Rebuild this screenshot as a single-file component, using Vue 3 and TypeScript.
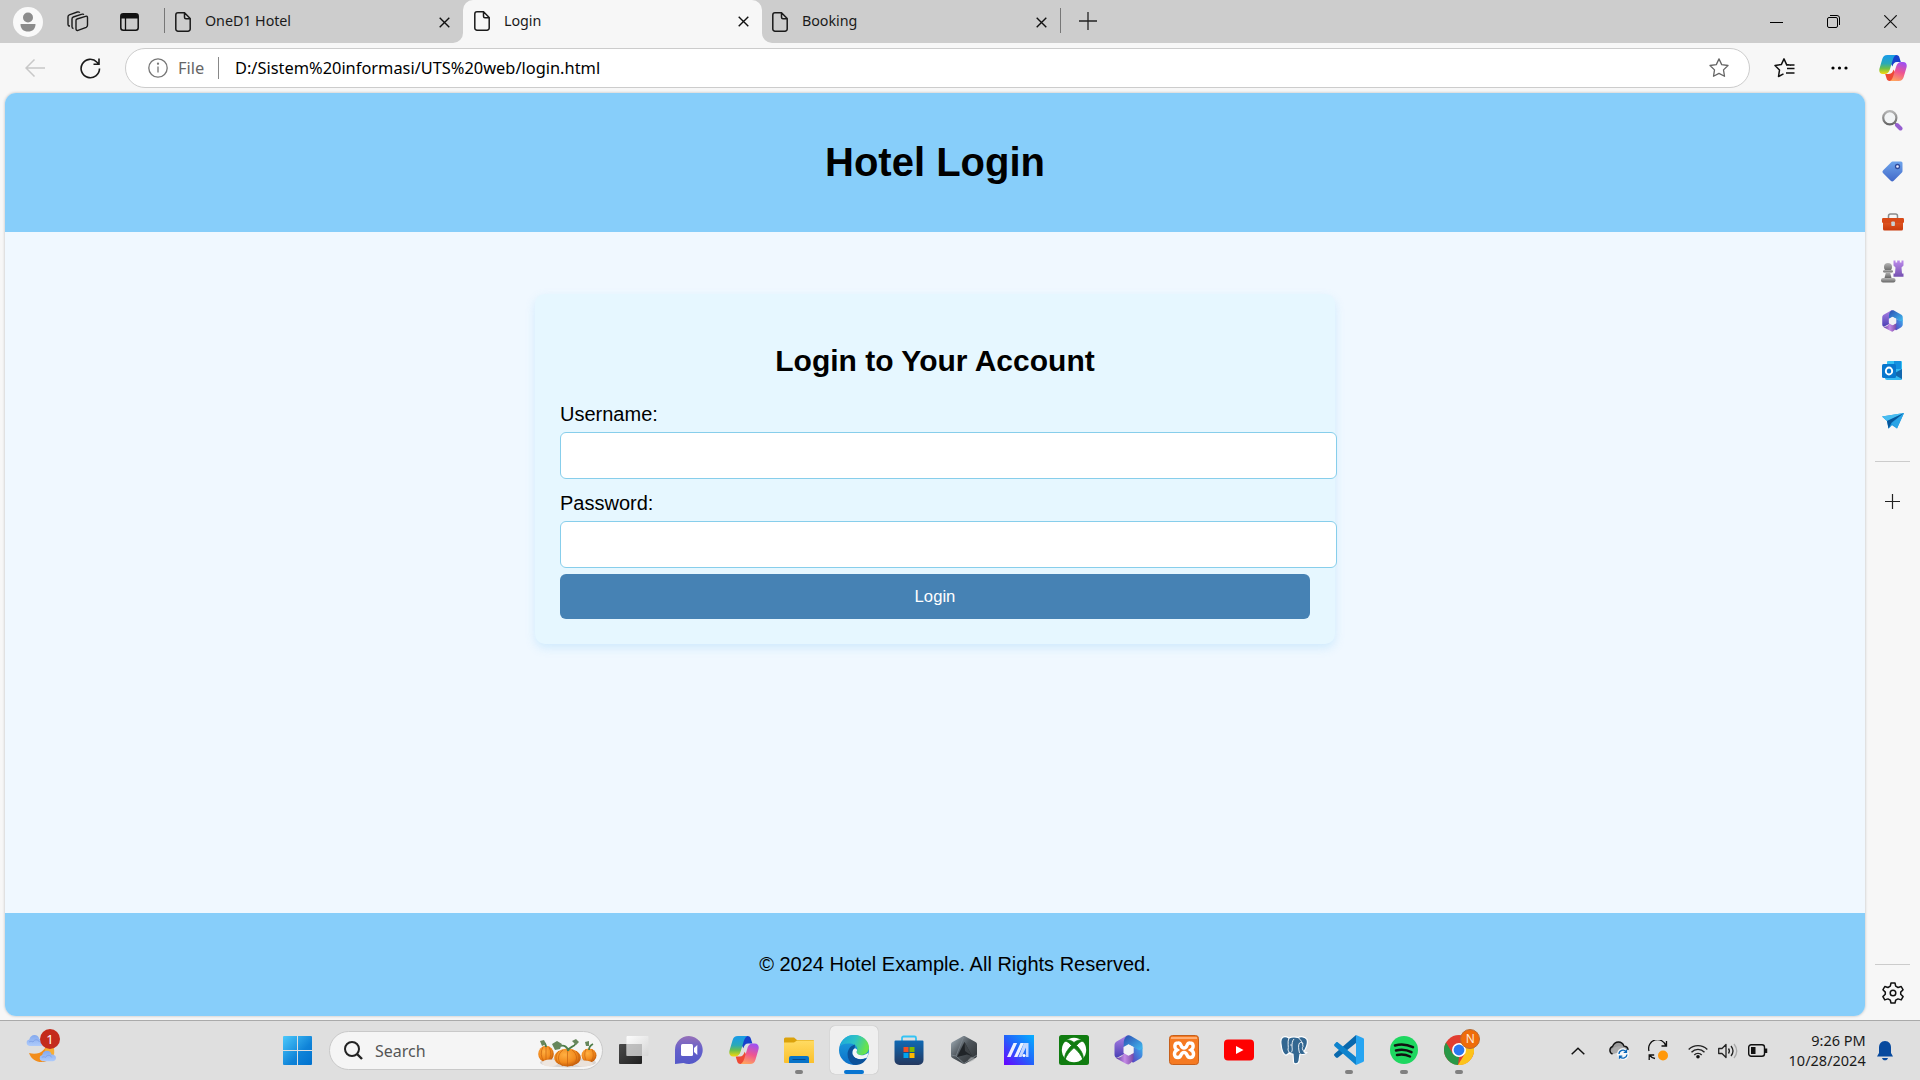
<script setup lang="ts">
interface Tab { title: string; width: number }
const firstTab: Tab = { title: 'OneD1 Hotel', width: 298 }
const fields: { id: string; label: string; type: string }[] = [
  { id: 'username', label: 'Username:', type: 'text' },
  { id: 'password', label: 'Password:', type: 'password' },
]
</script>

<template>
  <div class="screen">
    <svg width="0" height="0" class="defs">
      <defs>
        <linearGradient id="cpA" x1="0" y1="0" x2="0" y2="1"><stop offset=".1" stop-color="#1b9de2" /><stop offset=".45" stop-color="#2aa9b8" /><stop offset=".7" stop-color="#6cbf4b" /><stop offset="1" stop-color="#f7d80c" /></linearGradient>
        <linearGradient id="cpB" x1=".6" y1="0" x2=".3" y2="1"><stop offset="0" stop-color="#a050f0" /><stop offset=".5" stop-color="#ef5590" /><stop offset="1" stop-color="#ffa45e" /></linearGradient>
        <linearGradient id="mA" x1="0" y1="1" x2="1" y2="0"><stop offset="0" stop-color="#5a3fc0" /><stop offset="1" stop-color="#36b5ef" /></linearGradient>
        <linearGradient id="mB" x1="0" y1="0" x2="0" y2="1"><stop offset="0" stop-color="#b083e6" /><stop offset="1" stop-color="#4a3fb5" /></linearGradient>
        <linearGradient id="mC" x1="0" y1="0" x2="1" y2="0"><stop offset="0" stop-color="#5c3a9e" /><stop offset=".5" stop-color="#c58ae6" /><stop offset="1" stop-color="#7a4aa6" /></linearGradient>
        <linearGradient id="mD" x1="0" y1="0" x2="1" y2="1"><stop offset="0" stop-color="#2c4bb0" /><stop offset="1" stop-color="#43bff2" /></linearGradient>
        <linearGradient id="win" x1="0" y1="0" x2="1" y2="1"><stop offset="0" stop-color="#4cc9fb" /><stop offset=".6" stop-color="#0f83d8" /><stop offset="1" stop-color="#0071ce" /></linearGradient>
        <linearGradient id="tag" x1="0" y1="0" x2="0" y2="1"><stop offset="0" stop-color="#6ea4ec" /><stop offset="1" stop-color="#4168c8" /></linearGradient>
        <linearGradient id="purple" x1="0" y1="0" x2="0" y2="1"><stop offset="0" stop-color="#bd8bec" /><stop offset="1" stop-color="#7450b0" /></linearGradient>
        <linearGradient id="grey" x1="0" y1="0" x2="0" y2="1"><stop offset="0" stop-color="#b5b5b5" /><stop offset="1" stop-color="#666" /></linearGradient>
        <linearGradient id="orange" x1="0" y1="0" x2="0" y2="1"><stop offset="0" stop-color="#e8602a" /><stop offset="1" stop-color="#c93a0c" /></linearGradient>
        <linearGradient id="teams" x1="0" y1="0" x2="0" y2="1"><stop offset="0" stop-color="#9670b8" /><stop offset=".5" stop-color="#6460cb" /><stop offset="1" stop-color="#5458c8" /></linearGradient>
        <linearGradient id="folder" x1="0" y1="0" x2="0" y2="1"><stop offset="0" stop-color="#ffdb62" /><stop offset="1" stop-color="#fbc02c" /></linearGradient>
        <linearGradient id="edgeA" x1="0" y1="0" x2="1" y2=".3"><stop offset="0" stop-color="#1aa5df" /><stop offset=".55" stop-color="#2ec3c4" /><stop offset="1" stop-color="#67e34c" /></linearGradient>
        <linearGradient id="edgeB" x1="0" y1="0" x2="0" y2="1"><stop offset="0" stop-color="#1ea4e0" /><stop offset="1" stop-color="#0c6fc8" /></linearGradient>
        <linearGradient id="store" x1="0" y1="0" x2="0" y2="1"><stop offset="0" stop-color="#0f69b4" /><stop offset="1" stop-color="#24385f" /></linearGradient>
        <linearGradient id="asus" x1="1" y1="0" x2="0" y2="1"><stop offset="0" stop-color="#05b0ff" /><stop offset=".5" stop-color="#2263fb" /><stop offset="1" stop-color="#6a00ff" /></linearGradient>
        <linearGradient id="arm" x1="0" y1="0" x2="1" y2="1"><stop offset="0" stop-color="#a8b5bf" /><stop offset=".45" stop-color="#4f565c" /><stop offset="1" stop-color="#2b2e31" /></linearGradient>
        <radialGradient id="pump" cx=".4" cy=".35" r=".7"><stop offset="0" stop-color="#ffb042" /><stop offset=".6" stop-color="#f28a1d" /><stop offset="1" stop-color="#bd5507" /></radialGradient>
        <linearGradient id="task" x1="0" y1="0" x2="1" y2="1"><stop offset="0" stop-color="#4a4a4a" /><stop offset="1" stop-color="#202020" /></linearGradient>
        <linearGradient id="pane" x1="0" y1="0" x2="1" y2="1"><stop offset="0" stop-color="#fff" /><stop offset="1" stop-color="#d5d5d5" /></linearGradient>
        <linearGradient id="cloud" x1="0" y1="0" x2="0" y2="1"><stop offset="0" stop-color="#84a9ee" /><stop offset="1" stop-color="#aecbfb" /></linearGradient>
      </defs>
      <symbol id="copilot" viewBox="0 0 28 26">
        <path d="M14 0h3.200c2 0 2.800 1 3.300 2.800L21.800 7H18c-2.600 0-3.700 1.600-4.600 4.400L10 5z" fill="#1741cc" />
        <path d="M14 26h-3.200c-2 0-2.800-1-3.300-2.800L6.200 19H10c2.600 0 3.700-1.600 4.600-4.400L18 21z" fill="#ee4a35" />
        <path d="M8.300 0H17.200C14.800 1 14 4 13 7.500L11 14c-1 3.500-2.500 5-5.500 5H4C.8 19-.3 16.500.5 13.500L3.300 4C4.200 1.200 5.500 0 8.300 0z" fill="url(#cpA)" />
        <path d="M19.700 26H10.800C13.200 25 14 22 15 18.500L17 12c1-3.500 2.500-5 5.500-5H24c3.200 0 4.300 2.500 3.500 5.500L24.700 22c-.9 2.800-2.200 4-5 4z" fill="url(#cpB)" />
      </symbol>
      <symbol id="m365" viewBox="0 0 28 30">
        <path d="M12 .8 2.500 6.300C.8 7.300 0 8.500 0 10.500v9c0 2.500 1.500 3.800 3.500 2.800L10 18.700 9.500 10C9.500 5.500 10.500 3 14.500.2 13.500 0 13 .2 12 .8z" fill="url(#mB)" />
        <path d="M12 1C9.700 3.300 9.200 5.500 9.200 8.500V13L14 9.500l5 2.500 5 3.500c2 1 4-.5 4-3v-2c0-2-.8-3.200-2.500-4.200L16.500.9C15 0 13.500 0 12 1z" fill="url(#mD)" />
        <path d="M28 10.500v9c0 2-.8 3.200-2.500 4.200L19 27.500c-2 .5-2-3-1-5l1-5.500v-5l5 2.700c2.500 1 4-1.200 4-4.200z" fill="url(#mA)" />
        <path d="M1.500 22.500c2 .8 4 0 6-1.500L10 18l4.500 2.300 4.500-2.600v3.800c0 3.500-1.500 6.500-5 8-.8 0-1.700-.2-2.500-.7l-9-5.100c-.5-.3-.8-.7-1-1.200z" fill="url(#mC)" />
        <path d="m14 9.200 5 2.900v5.800l-5 2.900-5-2.900v-5.800z" fill="#f1f1f4" />
      </symbol>
      <symbol id="page" viewBox="0 0 16 20">
        <path d="M3 .8h6.500L15.200 6.500V17a2.200 2.200 0 0 1-2.200 2.200H3A2.200 2.200 0 0 1 .8 17V3A2.200 2.200 0 0 1 3 .8zM9.500 1v4.200c0 .9.600 1.500 1.500 1.500h4" fill="none" stroke="#1a1a1a" stroke-width="1.500" />
      </symbol>
      <symbol id="x" viewBox="0 0 11 11"><path d="m.7.700 9.600 9.600m0-9.600L.7 10.300" fill="none" stroke="#111" stroke-width="1.400" /></symbol>
      <symbol id="cloudy" viewBox="0 0 18 11"><path d="M3.500 11a3.300 3.300 0 0 1-.2-6.500C4 1.500 6 0 8.500 0s4.300 1.500 4.800 4c3 0 4.700 1.500 4.700 3.500S16.500 11 14.500 11z" fill="url(#cloud)" /><path d="M3 7c1.500-1 3-.7 4 0 1.500-3 5-3 6.500 0" fill="none" stroke="#7a9de4" stroke-width=".8" /></symbol>
    </svg>

    <header class="tabstrip">
      <div class="strip-left">
        <div class="avatar"><svg width="30" height="30" viewBox="0 0 30 30"><circle cx="15" cy="10.500" r="5" fill="#8c8c8c" /><path d="M7.500 17h15c0 5-3 7.500-7.500 7.500S7.500 22 7.500 17z" fill="#8c8c8c" /></svg></div>
        <svg class="ic-work" width="22" height="21" viewBox="0 0 22 21" fill="none" stroke="#1a1a1a" stroke-width="1.400"><path d="m10 8 8.500-2.700c1.300-.4 2 .2 2 1.500v7.500c0 1-.4 1.600-1.300 2L11 19.300c-1.300.5-2-.2-2-1.500V9.500c0-.8.300-1.300 1-1.500zM6.500 17.500c-1 0-1.500-.5-1.500-1.700V8c0-1 .4-1.700 1.300-2L15 3.200c.8-.3 1.500 0 1.700.7M3 15c-1.300 0-2-.5-2-1.700V5.800c0-1 .4-1.700 1.300-2l8-2.800c1.200-.3 2 0 2.400.8" /></svg>
        <svg class="ic-tabs" width="19" height="18" viewBox="0 0 19 18"><rect x=".8" y=".8" width="17.400" height="16.400" rx="2.500" fill="none" stroke="#111" stroke-width="1.500" /><path d="M1 5.500V3a2 2 0 0 1 2-2h13a2 2 0 0 1 2 2v2.500z" fill="#111" /><path d="M5.500 5v12" stroke="#111" stroke-width="1.300" /></svg>
        <i class="bar"></i>
        <div class="tab" :style="{ width: firstTab.width + 'px' }">
          <svg width="16" height="20"><use href="#page" /></svg><span>{{ firstTab.title }}</span><svg class="x" width="11" height="11"><use href="#x" /></svg>
        </div>
      </div>
      <div class="active-wrap">
        <div class="tab active"><svg width="16" height="20"><use href="#page" /></svg><span>Login</span><svg class="x" width="11" height="11"><use href="#x" /></svg></div>
      </div>
      <div class="strip-right">
        <div class="tab third"><svg width="16" height="20"><use href="#page" /></svg><span>Booking</span><svg class="x" width="11" height="11"><use href="#x" /></svg></div>
        <i class="bar end"></i>
        <svg class="new" width="18" height="18" viewBox="0 0 18 18"><path d="M9 0v18M0 9h18" stroke="#222" stroke-width="1.300" /></svg>
        <div class="wincontrols">
          <svg width="13" height="14" viewBox="0 0 13 14"><path d="M0 7.500h13" stroke="#000" /></svg>
          <svg width="13" height="13" viewBox="0 0 13 13" fill="none" stroke="#000"><rect x=".5" y="2.500" width="10" height="10" rx="1.500" /><path d="M3 .5h7a2.500 2.500 0 0 1 2.500 2.500v7" /></svg>
          <svg width="13" height="13" viewBox="0 0 13 13"><path d="m.3.300 12.400 12.400m0-12.400L.3 12.700" stroke="#111" stroke-width="1.200" /></svg>
        </div>
      </div>
    </header>

    <div class="body">
      <div class="main">
        <div class="toolbar">
          <svg class="back" width="20" height="18" viewBox="0 0 20 18" fill="none" stroke="#c8c8c8" stroke-width="1.500"><path d="M20 9H1M9.500.5 1 9l8.500 8.500" /></svg>
          <svg class="reload" width="21" height="21" viewBox="0 0 21 21" fill="none" stroke="#1a1a1a" stroke-width="1.600"><path d="M19.500 10.500A9.200 9.200 0 1 1 17 4.200L18.800 6M19 .5V6.300h-5.500" /></svg>
          <div class="address">
            <svg width="20" height="20" viewBox="0 0 20 20" fill="none" stroke="#767676" stroke-width="1.300"><circle cx="10" cy="10" r="9.200" /><path d="M10 8.500v6" /><circle cx="10" cy="5.700" r=".5" fill="#767676" /></svg>
            <span class="file">File</span><i></i><span class="url">D:/Sistem%20informasi/UTS%20web/login.html</span>
            <svg class="star" width="20" height="20" viewBox="0 0 20 20" fill="none" stroke="#666" stroke-width="1.300" stroke-linejoin="round"><path d="m10 .9 2.700 5.700 6.300.9-4.500 4.400 1 6.400L10 15.400l-5.500 2.900 1-6.400L1 7.500l6.300-.9z" /></svg>
          </div>
          <svg class="favs" width="21" height="20" viewBox="0 0 21 20" fill="none" stroke="#111" stroke-width="1.500" stroke-linejoin="round"><path d="M9.500 15.800 4.500 18.500l1-6.400L1 7.500l6.300-.9L10 .9l2.600 5.700 4.400.6M13 10.500h7.500M12 7h8.500M12 15h8.500" /></svg>
          <svg class="more" width="17" height="4" viewBox="0 0 17 4"><circle cx="2" cy="2" r="1.600" /><circle cx="8.500" cy="2" r="1.600" /><circle cx="15" cy="2" r="1.600" /></svg>
        </div>
        <div class="viewport">
          <div class="hero"><h1>Hotel Login</h1></div>
          <div class="content">
            <form class="card" @submit.prevent>
              <h2>Login to Your Account</h2>
              <div v-for="f in fields" :key="f.id" class="field"><label :for="f.id">{{ f.label }}</label><input :id="f.id" :type="f.type" /></div>
              <button>Login</button>
            </form>
          </div>
          <footer>© 2024 Hotel Example. All Rights Reserved.</footer>
        </div>
      </div>
      <aside>
        <svg width="28" height="26"><use href="#copilot" /></svg>
        <svg width="21" height="21" viewBox="0 0 21 21"><circle cx="7.800" cy="7.800" r="6.600" fill="#f2f4f5" stroke="url(#grey)" stroke-width="2.200" /><path d="m12 12 3 3" stroke="#777" stroke-width="2" /><path d="m15 15 3.500 3.500" stroke="#965ed0" stroke-width="4" stroke-linecap="round" /></svg>
        <svg width="21" height="21" viewBox="0 0 21 21"><path d="M10.500.5H19a1.500 1.500 0 0 1 1.500 1.500v8c0 .7-.2 1.200-.8 1.800l-8 8c-1 1-2 1-3 0l-7.500-7.500c-1-1-1-2 0-3l8-8c.4-.5.700-.8 1.300-.8z" fill="url(#tag)" /><circle cx="15.500" cy="5.500" r="2" fill="#eef" stroke="#304b9d" stroke-width="1.300" /></svg>
        <svg width="22" height="18" viewBox="0 0 22 18"><path d="M6.500 5V3a2 2 0 0 1 2-2h5a2 2 0 0 1 2 2v2" fill="none" stroke="#8a8a8a" stroke-width="1.500" /><rect x="1" y="6" width="20" height="11.500" rx="1.500" fill="url(#orange)" /><rect x="0" y="5" width="22" height="5" rx="1.200" fill="#d84a18" /><rect x="9.300" y="8.500" width="3.600" height="4.500" rx=".8" fill="#c9d0d3" /></svg>
        <svg width="23" height="23" viewBox="0 0 23 23"><g fill="url(#grey)"><circle cx="7" cy="7" r="4" /><rect x="2" y="10" width="10" height="2.600" rx="1.300" /><path d="M5 12h4l1.500 6h-7z" /><rect x="0" y="18" width="14.500" height="4.500" rx="2" /></g><path d="M12.500.5h2v2h1.700v-2h2.600v2h1.700v-2h2v5l-2 2 .5 6h1.500v3.200H12.500v-3.200H14l.5-6-2-2z" fill="url(#purple)" /></svg>
        <svg width="21" height="22"><use href="#m365" /></svg>
        <svg width="21" height="21" viewBox="0 0 21 21"><rect x="5" y="1" width="15" height="14" rx="1" fill="#35c0f3" /><path d="M12 1h7v8h-7z" fill="#1490df" /><path d="m3 11 17-2v10a1 1 0 0 1-1 1H5a2 2 0 0 1-2-2z" fill="#35b8f1" /><path d="M20 9v10L11 14z" fill="#1267ae" /><rect x="0" y="4" width="14" height="14" rx="1.500" fill="#0877ce" /><ellipse cx="7" cy="11" rx="3.200" ry="3.500" fill="none" stroke="#fff" stroke-width="1.900" /></svg>
        <svg width="22" height="17" viewBox="0 0 22 17"><path d="M0 3.500 22 0 15 15.500l-5-3.200-3.500 3.500L5 8z" fill="#1b95dd" /><path d="M0 3.500 22 0 5 8z" fill="#48bdf1" /><path d="M22 0 5 8l1.500 7.500 3.200-6z" fill="#07579c" /><path d="M22 0 9.500 10.500 15 15.500z" fill="#2aa4e6" /></svg>
        <i></i>
        <svg width="15" height="15" viewBox="0 0 15 15"><path d="M7.500 0v15M0 7.500h15" stroke="#222" stroke-width="1.200" /></svg>
        <i class="low"></i>
        <svg class="gear" width="22" height="22" viewBox="0 0 22 22" fill="none" stroke="#111" stroke-width="1.500" stroke-linejoin="round"><path d="M9 1h4l.7 3.200 2.300 1.300 3.200-1 1.900 3.300-2.400 2.300v2.200l2.400 2.300-1.900 3.300-3.200-1-2.300 1.300L13 21H9l-.7-2.800L6 16.900l-3.200 1-1.900-3.300 2.400-2.300v-2.200L.9 7.800l1.900-3.300 3.200 1 2.300-1.300z" /><circle cx="11" cy="11" r="2.800" /></svg>
      </aside>
    </div>

    <nav class="taskbar">
      <div class="weather">
        <svg width="34" height="35" viewBox="0 0 34 35"><path d="M3 25c10 3 17-3 18-10 7 3 8 11 3 16-7 6-18 3-21-6z" fill="#f28d1c" /><path d="M20 12c7 1 9 8 8 15l-9-3z" fill="#f7ae35" /><use href="#cloudy" x="0" y="7" width="18" height="11" /><use href="#cloudy" x="13" y="22" width="17" height="12" /></svg>
        <b>1</b>
      </div>
      <svg class="start" width="29" height="29" viewBox="0 0 29 29"><path d="M0 1a1 1 0 0 1 1-1h13v14H0zm15-1h13a1 1 0 0 1 1 1v13H15zM0 15h14v14H1a1 1 0 0 1-1-1zm15 0h14v13a1 1 0 0 1-1 1H15z" fill="url(#win)" /></svg>
      <div class="search">
        <svg width="19" height="19" viewBox="0 0 19 19" fill="none" stroke="#222"><circle cx="8" cy="8" r="7" stroke-width="2" /><path d="m13 13 5 5" stroke-width="2.400" /></svg>
        <span>Search</span>
        <svg class="pumps" width="60" height="30" viewBox="0 0 60 30">
          <ellipse cx="31" cy="24.500" rx="28" ry="5" fill="#d9d4d1" />
          <ellipse cx="9" cy="16" rx="7.800" ry="8.300" fill="url(#pump)" /><ellipse cx="52" cy="17.500" rx="7.500" ry="7" fill="url(#pump)" />
          <path d="M6 9q-4 7 1 15M12 9q4 7-1 15M9 8v16M49 11q-3 7 1 13M55 11q3 7-1 13" fill="none" stroke="#c86310" stroke-width=".7" />
          <ellipse cx="13" cy="25" rx="8" ry="3.500" fill="#eee6df" /><ellipse cx="47" cy="25.500" rx="9" ry="3" fill="#eae2db" />
          <ellipse cx="30.500" cy="19.500" rx="13.300" ry="9" fill="url(#pump)" />
          <path d="M26 12c-6 4-6 12 0 16M30.500 11.500v17M35 12c6 4 6 12 0 16M22 13c-4 4-4 9 0 13M39 13c4 4 4 9 0 13" fill="none" stroke="#c86310" stroke-width=".7" />
          <g fill="none" stroke="#4e7d48" stroke-width="1.800"><path d="M31 13c0-4-4-6-7-5m7 5c1-5 6-3 8-8M9 9c0-3-1-4-3-5M52 12c0-4 2-5 4-6" /></g>
          <path d="m15 6 5-3 5 3-2 5-5 1zM3 3l4-1 2 4-4 2zM35 3l4-2 3 3-3 3zM48 4l4-1v5h-3z" fill="#67875c" />
        </svg>
      </div>
      <div class="apps">
        <div class="cell"><svg width="30" height="30" viewBox="0 0 30 30"><rect x="0" y="9" width="23" height="20" rx="1" fill="url(#task)" /><rect x="7.500" y="1" width="22" height="20" rx="1" fill="url(#pane)" opacity=".93" /><path d="M7.500 9H23v12H7.500z" fill="#aaa" opacity=".65" /></svg></div>
        <div class="cell"><svg width="30" height="30" viewBox="0 0 30 30"><path d="M15 1a14 14 0 1 1-5.500 27L1 29V15A14 14 0 0 1 15 1z" fill="url(#teams)" /><rect x="7" y="9" width="12" height="12" rx="1.500" fill="#fff" /><path d="m20 13 3.300-3v10L20 17z" fill="#fff" /></svg></div>
        <div class="cell"><svg width="30" height="28"><use href="#copilot" /></svg></div>
        <div class="cell"><svg width="30" height="30" viewBox="0 0 30 30"><path d="M0 4a1.500 1.500 0 0 1 1.500-1.500H10L13 5h16a1 1 0 0 1 1 1v5H0z" fill="#dba20c" /><path d="M0 7.500h10L13 5.500h17V28H1a1 1 0 0 1-1-1z" fill="url(#folder)" /><path d="M5 28v-5a2 2 0 0 1 2-2h16a2 2 0 0 1 2 2v5z" fill="#0873c8" /><path d="M8.500 24.500h13" stroke="#06498b" /></svg><u></u></div>
        <div class="cell open"><svg width="30" height="30" viewBox="0 0 30 30"><circle cx="15" cy="15" r="15" fill="url(#edgeB)" /><path d="M1 11C3 4 8 0 15 0c9 0 15 6 15 12.500 0 5-4 7.500-8 7.500-3 0-5.500-1.300-4.500-3C20 13 17 9 11 8.500 6 8 2.500 9.500 1 11z" fill="url(#edgeA)" /><path d="M16 9.500C7 12 6 24 14 29.500c5 1.500 11-1 14-6.500-9 4-15-1-14.500-6 .1-1.500 1-3 2.200-4z" fill="#0c529b" /><path d="M29.500 17.500C29 20 28.500 21.500 28 22.500c-8 4-15 0-14.500-5 0-2 1-3.500 2.500-4.200 3.500 1 1.500 3 1.500 4 1 4 8 4 12 .2z" fill="#f4f6f7" /><path d="M28 22.800c-8 4-14 0-14.400-4-.2 3.800 4 8.200 11 6z" fill="#0c529b" /></svg><u></u></div>
        <div class="cell"><svg width="30" height="30" viewBox="0 0 30 30"><path d="M8 6V3a1.500 1.500 0 0 1 1.500-1.500h11A1.500 1.500 0 0 1 22 3v3" fill="none" stroke="#34c3f4" stroke-width="1.800" /><path d="M.5 6.500a1 1 0 0 1 1-1h27a1 1 0 0 1 1 1V25a5 5 0 0 1-5 5h-19a5 5 0 0 1-5-5z" fill="url(#store)" /><path fill="#f25022" d="M9.500 12h5v5h-5z" /><path fill="#7fba00" d="M15.500 12h5v5h-5z" /><path fill="#00a4ef" d="M9.500 18h5v5h-5z" /><path fill="#ffb900" d="M15.500 18h5v5h-5z" /></svg></div>
        <div class="cell"><svg width="30" height="30" viewBox="0 0 30 30"><path d="M13.500 1.500c1-.6 2-.6 3 0l10 5.500c1 .6 1.500 1.300 1.500 2.500v11c0 1.200-.5 2-1.500 2.500l-10 5.500c-1 .6-2 .6-3 0L3.500 23C2.500 22.500 2 21.700 2 20.500v-11C2 8.300 2.500 7.600 3.500 7z" fill="url(#arm)" /><path d="m15 1-8 20-5-1M7 21l8 7.500L28 20" fill="none" stroke="#7d878f" stroke-width=".8" /><path d="M15.500 7 23 21l-5-1.500L8 22z" fill="#202428" /><path d="M15.500 7 23 21l-7-5z" fill="#3d4246" /><path d="m19 25 3-3 4 1-1 2-5 2.500z" fill="#a5a8aa" opacity=".6" /></svg></div>
        <div class="cell"><svg width="30" height="30" viewBox="0 0 30 30"><path fill="url(#asus)" d="M0 0h30v30H0z" /><path d="m3 22 6.500-14h3.600L6.600 22zM10 22l6.500-14H20l-6.500 14z" fill="#fff" opacity=".92" /><path d="M20 8h4.500v14H22v-9.500L17.500 22h-3z" fill="#d5e2ff" opacity=".9" /><circle cx="20" cy="20.500" r="1.600" fill="#fff" /></svg></div>
        <div class="cell"><svg width="30" height="30" viewBox="0 0 30 30"><rect width="30" height="30" rx="2.500" fill="#107c10" /><circle cx="15" cy="15" r="12.200" fill="#fff" /><path d="M5.500 6.200C8 4 12 5 15 7.500 18 5 22 4 24.500 6.200 22 6 20 7.500 17.500 10.500 21.500 14.500 25.300 20 23.900 24.500 22.500 20.500 19 16 15 12.800 11 16 7.500 20.500 6.100 24.500 4.700 20 8.500 14.500 12.500 10.500 10 7.500 8 6 5.500 6.200z" fill="#107c10" stroke="#107c10" stroke-width=".8" /></svg></div>
        <div class="cell"><svg width="29" height="30"><use href="#m365" /></svg></div>
        <div class="cell"><svg width="30" height="30" viewBox="0 0 30 30"><rect x=".5" y=".5" width="29" height="29" rx="3" fill="#f57a22" stroke="#c65f1b" /><path d="M2 2h26v2H2z" fill="#ffad72" /><path d="M8 15c-3-2-3-7 1-7 4-.5 2 5 6 5s2-5.500 6-5c4 0 4 5 1 7 4 2.500 3 7.500-1 7.500s-2-5-6-5-2 5-6 5-5-5-1-7.500z" fill="none" stroke="#fff" stroke-width="3.400" /></svg></div>
        <div class="cell"><svg width="30" height="30" viewBox="0 0 30 30"><rect y="4.500" width="30" height="21" rx="4" fill="#f00" /><path d="m12 11 7.500 4-7.500 4z" fill="#fff" /></svg></div>
        <div class="cell"><svg width="30" height="30" viewBox="0 0 30 30"><path d="M10 3C5 0 1 2 2 9c.5 5 2 10 4.500 11 1.500.5 2.500-1 3.500-2 1 1 3 1 4 1l.5 8c.3 2.500 5 2.500 5.500-1l1-7c3 1 6 0 7-1.500-2 0-3-.3-3-1 2.500-4 4-9 3-12-2-3-6-3.500-9-2-3-1-6-1-9 .5z" fill="#336791" stroke="#fff" stroke-width="1.200" stroke-linejoin="round" /><path d="M10 3c-2 4 0 9-1 12l1.500 3c3 0 3-4 2.500-6 0-3 0-6 2-8M19 2.500c3 2 5 6 5 9-1 1-1 3 1 5M20.500 18c-1-4-1.500-8 0-10 1-1 3-.5 3.500.5" fill="none" stroke="#fff" stroke-width=".9" /><circle cx="12" cy="10" r=".7" fill="#fff" /></svg></div>
        <div class="cell"><svg width="30" height="30" viewBox="0 0 30 30"><path d="m22 0 7 3a1.500 1.500 0 0 1 1 1.500v21a1.500 1.500 0 0 1-1 1.500l-7 3z" fill="#27a5f2" /><path d="M22 0v8L4 22.500c-.7.600-1.300.5-2 0L.6 21c-.8-.7-.7-1.500 0-2.200z" fill="#0868ad" /><path d="M22 30v-8L4 7.500c-.7-.6-1.300-.5-2 0L.6 9c-.8.700-.7 1.500 0 2.200z" fill="#0e83cd" /></svg><u></u></div>
        <div class="cell"><svg width="30" height="30" viewBox="0 0 30 30"><circle cx="15" cy="15" r="14" fill="#1ed760" /><path d="M6 10.500q9-2.500 18 1.700M7 15.500q8-2.300 15.500 1.700M8 20q7-1.500 13 1.500" fill="none" stroke="#111" stroke-width="2.500" stroke-linecap="round" /></svg><u></u></div>
        <div class="cell chrome"><svg width="30" height="30" viewBox="0 0 30 30"><circle cx="15" cy="15" r="15" fill="#e23d30" /><path d="M2 7.500 9 19 15 22l-1 8A15 15 0 0 1 2 7.500z" fill="#299847" /><path d="M15 8h13.300A15 15 0 0 1 14 30l7-11.500z" fill="#fdc31b" /><circle cx="15" cy="15" r="7" fill="#fff" /><circle cx="15" cy="15" r="5.400" fill="#2a78f1" /></svg><b>N</b><u></u></div>
      </div>
      <div class="tray">
        <svg width="14" height="8" viewBox="0 0 14 8"><path d="m.7 7.200 6.300-6 6.300 6" fill="none" stroke="#111" stroke-width="1.500" /></svg>
        <svg class="od" width="21" height="19" viewBox="0 0 21 19"><path d="M4.500 13A4 4 0 0 1 4.500 5.500C6 2 8 1 10.500 1S15 2.500 16 5.200c2.500 0 4 1.600 4 3.800" fill="#999" stroke="#111" stroke-width="1.400" /><path d="M3 11C3 7 9 4 17 6l1 6H5z" fill="#aaa" /><circle cx="15" cy="13" r="6" fill="#f6f8fa" /><path d="M11 13a4 4 0 0 1 7-2.500M18.500 8.500v2.800h-2.800M19 13.500a4 4 0 0 1-7 2.300m-.5 2v-2.700h2.800" fill="none" stroke="#0967b9" stroke-width="1.300" /></svg>
        <svg class="sync" width="20" height="21" viewBox="0 0 20 21"><path d="M1 11A8.700 8.700 0 0 1 18 6M18.500 1v5h-5M7 18.500C4.500 18 2.500 16.500 1.300 15M1.200 20v-5h5" fill="none" stroke="#111" stroke-width="1.300" /><circle cx="15" cy="15.500" r="5" fill="#ff980a" /></svg>
        <svg class="wifi" width="20" height="16" viewBox="0 0 20 16"><path d="M.7 6.500a13 13 0 0 1 18.600 0M3.500 9.200a9 9 0 0 1 13 0M6.300 12a5 5 0 0 1 7.400 0" fill="none" stroke="#222" stroke-width="1.400" /><circle cx="10" cy="13.800" r="1.800" fill="#111" /></svg>
        <svg class="vol" width="20" height="16" viewBox="0 0 20 16" fill="none" stroke="#222" stroke-width="1.300"><path d="M.7 5.500H4L8 1.500v13l-4-4H.7z" stroke-linejoin="round" /><path d="M10.500 5.500q1.800 2.500 0 5M13 3q4 5 0 10" /><path d="M16 1q5.500 7 0 14" stroke="#aaa" /></svg>
        <svg class="bat" width="20" height="13" viewBox="0 0 20 13"><rect x=".7" y=".7" width="15.800" height="11.600" rx="2.500" fill="none" stroke="#111" stroke-width="1.400" /><rect x="3" y="3" width="4.500" height="7" fill="#111" /><path d="M18 4.500v4.500" stroke="#111" stroke-width="2.500" /></svg>
        <div class="clock"><span>9:26 PM</span><span>10/28/2024</span></div>
        <svg class="bell" width="16" height="20" viewBox="0 0 16 20"><path d="M8 0c4 0 6 3 6 6.500V12l2 3.500H0L2 12V6.500C2 3 4 0 8 0zM5 17h6c-.5 1.600-1.500 2.300-3 2.300S5.500 18.600 5 17z" fill="#084a9e" /></svg>
      </div>
    </nav>
  </div>
</template>

<style>
html, body { margin: 0; overflow: hidden; }
</style>
<style scoped>
* { box-sizing: border-box; }
svg { display: block; flex: none; }
.defs { position: absolute; }
.screen { width: 1920px; height: 1080px; display: flex; flex-direction: column; background: #f7f7f7; font-family: "Noto Sans", "Open Sans", sans-serif; color: #1a1a1a; overflow: hidden; }
.tabstrip { height: 43px; display: flex; flex: none; }
.strip-left { width: 463px; background: #cdcdcd; border-radius: 0 0 10px 0; display: flex; align-items: center; }
.avatar { width: 30px; height: 30px; margin-left: 13px; border-radius: 50%; background: #f9f9f9; }
.ic-work { margin-left: 24px; }
.ic-tabs { margin-left: 31px; }
.bar { width: 1px; height: 25px; background: #777; margin: 0 0 2px 25px; flex: none; }
.tab { display: flex; align-items: center; height: 42px; font-size: 14.3px; padding-left: 10px; letter-spacing: -0.05px; flex: none; }
.tab span { margin-left: 14px; line-height: 20px; margin-bottom: 1px; }
.tab .x { margin-left: auto; margin-top: 1px; margin-right: 13px; }
.active-wrap { width: 299px; background: #cdcdcd; }
.active { background: #f7f7f7; border-radius: 10px 10px 0 0; height: 43px; padding-bottom: 1px; padding-left: 11px; }
.strip-right { flex: 1; background: #cdcdcd; border-radius: 0 0 0 10px; display: flex; align-items: center; }
.third { width: 298px; }
.bar.end { margin-left: 0; }
.new { margin-left: 18px; margin-bottom: 1px; }
.wincontrols { display: flex; align-items: center; gap: 44px; margin-left: auto; margin-right: 23px; }
.body { height: 977px; display: flex; }
.main { width: 1866px; display: flex; flex-direction: column; flex: none; }
.toolbar { height: 50px; display: flex; align-items: center; flex: none; }
.back { margin-left: 25px; }
.reload { margin-left: 35px; }
.address { margin-left: 24px; width: 1625px; height: 40px; border: 1px solid #ccc; border-radius: 20px; background: #fff; display: flex; align-items: center; padding-left: 22px; font-size: 16.4px; }
.file { margin-left: 10px; color: #666; width: 40px; line-height: 22px; }
.address i { width: 1px; height: 22px; background: #888; }
.url { margin-left: 16px; color: #000; letter-spacing: 0; line-height: 22px; white-space: nowrap; }
.star { margin-left: auto; margin-right: 20px; }
.favs { margin-left: 24px; }
.more { margin-left: 36px; }
.viewport { margin-left: 5px; width: 1860px; height: 923px; border-radius: 11px; overflow: hidden; background: #f0f8ff; box-shadow: 0 0 3px rgba(0,0,0,.25); display: flex; flex-direction: column; font-family: Arial, "Liberation Sans", sans-serif; font-size: 20px; color: #000; }
.hero { height: 139px; background: #87cefa; display: flex; justify-content: center; }
h1 { font-size: 40px; line-height: 46px; margin: 46px 0 0; }
.content { height: 681px; padding-top: 62px; display: flex; justify-content: center; align-items: flex-start; }
.card { width: 800px; height: 350px; background: #e6f7ff; border-radius: 10px; padding: 25px; box-shadow: 0 4px 10px rgba(135,206,250,.3); }
h2 { font-size: 30px; line-height: 34px; margin: 25px 0 25px; text-align: center; }
.field { height: 89px; }
label { display: block; line-height: 23px; margin-bottom: 6px; }
input { display: block; width: 777px; height: 47px; border: 1px solid #87ceeb; border-radius: 6px; background: #fff; outline: none; margin: 0; }
button { display: block; width: 750px; height: 45px; margin-top: -7px; border: 0; border-radius: 6px; background: #4682b4; color: #fff; font: 16.67px Arial, "Liberation Sans", sans-serif; }
footer { height: 103px; background: #87cefa; padding: 40px 0 0 40px; line-height: 23px; text-align: center; }
aside { width: 54px; padding-right: 1px; display: flex; flex-direction: column; align-items: center; padding-top: 12px; flex: none; }
aside svg:nth-child(2) { margin-top: 29px; }
aside svg:nth-child(3) { margin-top: 30px; }
aside svg:nth-child(4) { margin-top: 31px; }
aside svg:nth-child(5) { margin-top: 29px; }
aside svg:nth-child(6) { margin-top: 27px; }
aside svg:nth-child(7) { margin-top: 28px; }
aside svg:nth-child(8) { margin-top: 32px; }
aside i { width: 35px; height: 1px; background: #ccc; margin-top: 31px; flex: none; }
aside svg:nth-child(10) { margin-top: 32px; }
aside .low { margin-top: auto; }
aside .gear { margin: 17px 0 16px; }
.taskbar { height: 60px; border-top: 1px solid #aaa; background: #dfdfdf; display: flex; align-items: center; flex: none; }
.weather { position: relative; margin-left: 26px; width: 34px; height: 35px; margin-bottom: 10px; }
.weather b { position: absolute; right: 0; top: 1px; width: 20px; height: 20px; border-radius: 50%; background: #c42b1c; color: #fff; font-weight: 400; font-size: 13px; line-height: 20px; text-align: center; }
.start { margin-left: 223px; }
.search { margin-left: 17px; width: 274px; height: 39px; border: 1px solid #c9c9c9; border-radius: 20px; background: #f5f5f5; display: flex; align-items: center; padding-left: 14px; font-size: 16px; color: #555; }
.search span { margin-left: 12px; line-height: 22px; }
.pumps { margin-left: auto; margin-right: 5px; margin-top: 4px; }
.apps { display: flex; margin-left: 6.5px; gap: 7.06px; }
.cell { width: 48px; height: 48px; border-radius: 5px; position: relative; display: flex; align-items: center; justify-content: center; margin-bottom: 1px; }
.cell u { position: absolute; bottom: 0; left: 20px; width: 8px; height: 4px; border-radius: 2px; background: #808080; }
.open { background: #efefef; box-shadow: 0 0 1px rgba(0,0,0,.3); }
.open u { width: 20px; left: 14px; background: #0875d1; }
.chrome b { position: absolute; left: 25px; top: 3px; width: 20px; height: 20px; border-radius: 50%; background: #ef6c0a; border: 1px solid #b86b32; color: #ffe8d5; font: 12px/18px "Noto Sans", sans-serif; text-align: center; }
.tray { display: flex; align-items: center; margin-left: 87.5px; }
.od { margin-left: 23px; }
.sync { margin-left: 19px; }
.wifi { margin-left: 20px; }
.vol { margin-left: 10px; }
.bat { margin-left: 10px; }
.clock { width: 98px; display: flex; flex-direction: column; align-items: flex-end; font-size: 14.5px; line-height: 20px; margin-bottom: 2px; }
.bell { margin-left: 11px; }
</style>
